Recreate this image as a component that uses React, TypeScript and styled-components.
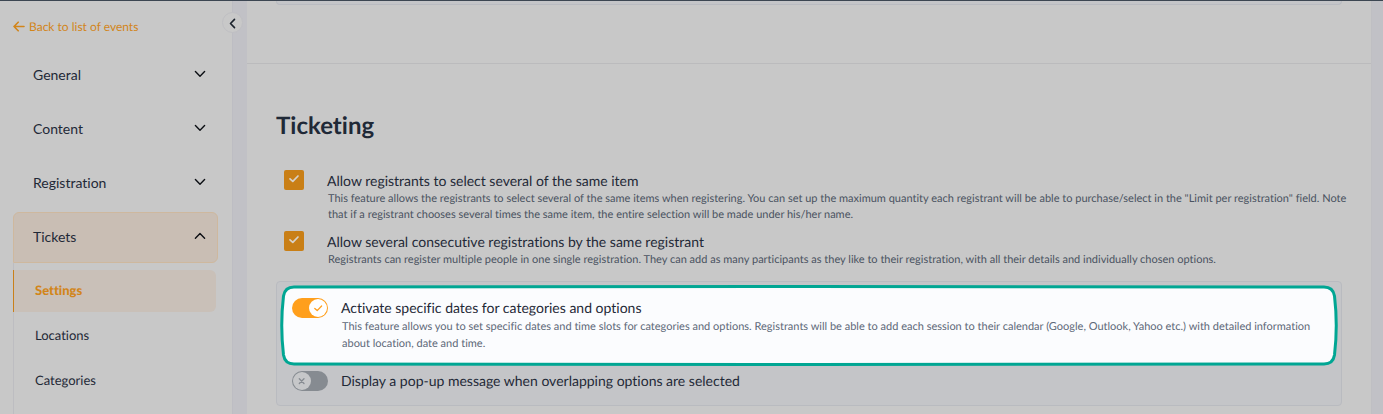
import React, { useState } from "react";
import styled, { createGlobalStyle } from "styled-components";

const GlobalStyle = createGlobalStyle`
  *, *::before, *::after { box-sizing: border-box; }
  body {
    margin: 0;
    background: #c1c1c6;
    color: #1f2937;
    font-family: Lato, "Liberation Sans", sans-serif;
    font-variant-ligatures: none;
    text-rendering: geometricPrecision;
  }
`;

const Page = styled.div`
  display: flex;
  height: 100vh;
  overflow: hidden;
  border-top: 1px solid #3c4652;
`;

const Sidebar = styled.aside`
  position: relative;
  flex: 0 0 233px;
  padding: 13px 14px 0 13px;
  background: #c8c8c8;
  border-right: 1px solid #bdbdc3;
`;

const BackLink = styled.a`
  display: flex;
  align-items: center;
  gap: 4px;
  height: 24px;
  color: #d2851a;
  font-size: 12px;
  text-decoration: none;
`;

const CollapseButton = styled.button`
  position: absolute;
  top: 11px;
  right: -11px;
  display: grid;
  place-items: center;
  width: 21px;
  height: 21px;
  padding: 0;
  color: #1b222c;
  background: #c8c8c8;
  border: 1px solid #bfbfc3;
  border-radius: 50%;
`;

const Nav = styled.nav`
  display: flex;
  flex-direction: column;
  gap: 3px;
  margin-top: 12px;
`;

const NavGroup = styled.button<{ $open?: boolean }>`
  display: flex;
  align-items: center;
  justify-content: space-between;
  height: 51px;
  padding: 0 11px 3px 19px;
  color: #1f2937;
  font: inherit;
  font-size: 14px;
  background: ${(p) => (p.$open ? "#c9beb4" : "transparent")};
  border: 1px solid ${(p) => (p.$open ? "#ceb89e" : "transparent")};
  border-radius: 6px 6px 6px 0;
  svg { color: #0c0f14; }
`;

const SubNav = styled.div`
  display: flex;
  flex-direction: column;
  gap: 3px;
  margin-top: -3px;
  padding: 7px 2px 14px 0;
  box-shadow: inset 1px 0 #bdbdc1;
`;

const SubLink = styled.a<{ $active?: boolean }>`
  display: flex;
  align-items: center;
  height: 42px;
  padding: 0 0 2px 21px;
  color: ${(p) => (p.$active ? "#d2851a" : "#1f2937")};
  font-size: 13px;
  font-weight: ${(p) => (p.$active ? 900 : 400)};
  text-decoration: none;
  background: ${(p) => (p.$active ? "#c9c0b8" : "transparent")};
  border-left: 1px solid ${(p) => (p.$active ? "#c9801a" : "transparent")};
  border-radius: 0 6px 6px 0;
`;

const Main = styled.main`
  flex: 1;
  min-width: 0;
  margin: 0 11px 0 14px;
  background: #c8c8c8;
  border-right: 1px solid #bfbfc3;
`;

const PreviousSection = styled.section`
  height: 63px;
  padding: 0 29px;
  border-bottom: 1px solid #bbbbbd;
`;

const PreviousPanel = styled.div`
  height: 4px;
  background: #c4c5c8;
  border: 1px solid #b9bbc1;
  border-top: 0;
  border-radius: 0 0 4px 4px;
`;

const Section = styled.section`
  padding: 44px 29px 0;
`;

const Title = styled.h2`
  margin: 0;
  font-size: 24px;
  line-height: 36px;
  font-weight: 700;
`;

const Options = styled.div`
  display: flex;
  flex-direction: column;
  gap: 8px;
  margin: 26px -8px 0 8px;
`;

const Option = styled.div`
  display: flex;
  align-items: flex-start;
  gap: 23px;
`;

const Check = styled.span`
  position: relative;
  display: flex;
  flex: none;
  svg { position: absolute; top: 3px; left: 4px; pointer-events: none; }
`;

const Box = styled.input`
  appearance: none;
  width: 20px;
  height: 20px;
  margin: 0;
  background: #a9a9ad;
  border-radius: 2px;
  &:checked { background: #c97f16; }
`;

const Copy = styled.div`
  min-width: 0;
`;

const Label = styled.label`
  display: block;
  font-size: 14px;
  line-height: 21px;
`;

const Hint = styled.p`
  margin: 0;
  padding-left: 1px;
  color: #4a5361;
  font-size: 11px;
  line-height: 16px;
`;

const Panel = styled.div`
  margin-top: 13px;
  padding: 3px 3px 14px;
  background: #c4c5c8;
  border: 1px solid #b9bbc0;
  border-radius: 4px;
`;

const SwitchRow = styled.div<{ $lit?: boolean }>`
  position: relative;
  display: flex;
  align-items: flex-start;
  gap: 13px;
  padding: ${(p) => (p.$lit ? "13px 16px 14px 12px" : "5px 16px 0 12px")};
  ${Label} { line-height: 20px; }
  ${Hint} { color: ${(p) => (p.$lit ? "#5d6878" : "#4a5361")}; line-height: 17px; }
`;

const Frame = styled.svg`
  position: absolute;
  inset: 0;
  width: 100%;
  height: 100%;
  overflow: visible;
`;

const Switch = styled.span<{ $dim?: boolean }>`
  position: relative;
  flex: none;
  display: flex;
  color: ${(p) => (p.$dim ? "#868b91" : "#ff9f1c")};
  svg { position: absolute; inset: 0; pointer-events: none; }
`;

const SwitchInput = styled.input`
  appearance: none;
  width: 36px;
  height: 20px;
  margin: 0;
  color: inherit;
  background: currentColor;
  border-radius: 10px;
`;

const SwitchCopy = styled(Copy)`
  position: relative;
`;

function Chevron({ up }: { up?: boolean }) {
  return (
    <svg width="12" height="8" viewBox="0 0 12 8" fill="none" stroke="currentColor" strokeWidth="1.4" strokeLinecap="round" strokeLinejoin="round" aria-hidden="true">
      <path d={up ? "M1.4 6.2 6 1.6l4.6 4.6" : "M1.4 1.6 6 6.2l4.6-4.6"} />
    </svg>
  );
}

function CheckOption({ id, label, hint }: { id: string; label: string; hint: string }) {
  const [on, setOn] = useState(true);
  return (
    <Option>
      <Check>
        <Box type="checkbox" id={id} checked={on} onChange={() => setOn(!on)} />
        {on && (
          <svg width="12" height="12" viewBox="0 0 12 12" fill="none" stroke="#d8d2c9" strokeWidth="1.7" strokeLinecap="round" strokeLinejoin="round" aria-hidden="true">
            <path d="M2 5.8 4.8 8.4 10 3" />
          </svg>
        )}
      </Check>
      <Copy>
        <Label htmlFor={id}>{label}</Label>
        <Hint>{hint}</Hint>
      </Copy>
    </Option>
  );
}

function SwitchOption({ id, label, hint, lit, initial }: { id: string; label: string; hint?: string; lit?: boolean; initial: boolean }) {
  const [on, setOn] = useState(initial);
  return (
    <SwitchRow $lit={lit}>
      {lit && (
        <Frame viewBox="0 0 1058 81" preserveAspectRatio="none" aria-hidden="true">
          <path
            d="M14 2 Q529 .8 1044 2 Q1053 2 1054.500 11 Q1058 40.500 1054.500 70 Q1053 79 1044 79 Q529 80.200 14 79 Q5 79 3.500 70 Q0 40.500 3.500 11 Q5 2 14 2Z"
            fill="#fbfcfe"
            stroke="#00a693"
            strokeWidth="3"
            vectorEffect="non-scaling-stroke"
          />
        </Frame>
      )}
      <Switch $dim={!lit}>
        <SwitchInput type="checkbox" role="switch" id={id} checked={on} onChange={() => setOn(!on)} />
        <svg width="36" height="20" viewBox="0 0 36 20" fill="none" stroke="currentColor" strokeLinecap="round" strokeLinejoin="round" aria-hidden="true">
          <circle cx={on ? 26 : 10} cy="10" r="9" stroke="none" fill={lit ? "#fff" : "#c6c7c9"} />
          {on ? <path d="M22.800 10.400 25.200 12.600 29.600 8" strokeWidth="1.300" /> : <path d="M7.300 7.800 12 12.500M12 7.800 7.300 12.500" strokeWidth="1.300" />}
        </svg>
      </Switch>
      <SwitchCopy>
        <Label htmlFor={id}>{label}</Label>
        {hint && <Hint>{hint}</Hint>}
      </SwitchCopy>
    </SwitchRow>
  );
}

export default function App() {
  return (
    <>
      <GlobalStyle />
      <Page>
        <Sidebar>
          <BackLink href="#events">
            <svg width="12" height="11" viewBox="0 0 12 11" fill="none" stroke="currentColor" strokeWidth="1.6" strokeLinecap="round" strokeLinejoin="round" aria-hidden="true">
              <path d="M5.200 1.200 1 5.500 5.200 9.800M1 5.500H11" />
            </svg>
            Back to list of events
          </BackLink>
          <CollapseButton aria-label="Collapse sidebar">
            <svg width="8" height="12" viewBox="0 0 8 12" fill="none" stroke="currentColor" strokeWidth="1.600" strokeLinecap="round" strokeLinejoin="round" aria-hidden="true">
              <path d="M5.500 2.400 1.500 6.500 5.500 10.600" />
            </svg>
          </CollapseButton>
          <Nav>
            <NavGroup>General<Chevron /></NavGroup>
            <NavGroup>Content<Chevron /></NavGroup>
            <NavGroup>Registration<Chevron /></NavGroup>
            <NavGroup $open aria-expanded="true">Tickets<Chevron up /></NavGroup>
            <SubNav>
              <SubLink href="#settings" $active aria-current="page">Settings</SubLink>
              <SubLink href="#locations">Locations</SubLink>
              <SubLink href="#categories">Categories</SubLink>
            </SubNav>
          </Nav>
        </Sidebar>
        <Main>
          <PreviousSection>
            <PreviousPanel />
          </PreviousSection>
          <Section>
            <Title>Ticketing</Title>
            <Options>
              <CheckOption
                id="same-item"
                label="Allow registrants to select several of the same item"
                hint={'This feature allows the registrants to select several of the same items when registering. You can set up the maximum quantity each registrant will be able to purchase/select in the "Limit per registration" field. Note that if a registrant chooses several times the same item, the entire selection will be made under his/her name.'}
              />
              <CheckOption
                id="consecutive"
                label="Allow several consecutive registrations by the same registrant"
                hint="Registrants can register multiple people in one single registration. They can add as many participants as they like to their registration, with all their details and individually chosen options."
              />
            </Options>
            <Panel>
              <SwitchOption
                id="dates"
                lit
                initial
                label="Activate specific dates for categories and options"
                hint="This feature allows you to set specific dates and time slots for categories and options. Registrants will be able to add each session to their calendar (Google, Outlook, Yahoo etc.) with detailed information about location, date and time."
              />
              <SwitchOption id="overlap" initial={false} label="Display a pop-up message when overlapping options are selected" />
            </Panel>
          </Section>
        </Main>
      </Page>
    </>
  );
}
